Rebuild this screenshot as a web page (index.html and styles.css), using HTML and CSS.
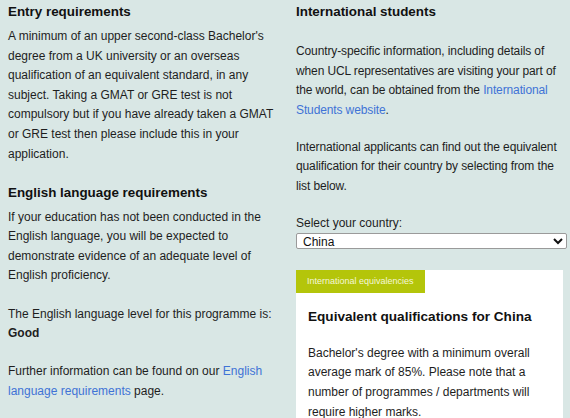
FILE: index.html
```html
<!DOCTYPE html>
<html lang="en">
<head>
  <meta charset="UTF-8" />
  <title>Entry requirements</title>
  <link rel="stylesheet" href="styles.css">
</head>
<body>
  <div class="page">
    <div class="col left">
      <h2>Entry requirements</h2>
      <p>A minimum of an upper second-class Bachelor's degree from a UK university or an overseas qualification of an equivalent standard, in any subject. Taking a GMAT or GRE test is not compulsory but if you have already taken a GMAT or GRE test then please include this in your application.</p>

      <h2 class="next">English language requirements</h2>
      <p>If your education has not been conducted in the English language, you will be expected to demonstrate evidence of an adequate level of English proficiency.</p>
      <p>The English language level for this programme is:<br><strong>Good</strong></p>
      <p>Further information can be found on our <a href="#">English language requirements</a> page.</p>
    </div>

    <div class="col right">
      <h2 class="wide">International students</h2>
      <p>Country-specific information, including details of when UCL representatives are visiting your part of the world, can be obtained from the <a href="#">International Students website</a>.</p>
      <p>International applicants can find out the equivalent qualification for their country by selecting from the list below.</p>
      <label class="select-label" for="country">Select your country:</label>
      <select id="country">
        <option>China</option>
      </select>

      <div class="card">
        <div class="tag">International equivalencies</div>
        <div class="card-body">
          <h3>Equivalent qualifications for China</h3>
          <p>Bachelor's degree with a minimum overall average mark of 85%. Please note that a number of programmes / departments will require higher marks.</p>
        </div>
      </div>
    </div>
  </div>
</body>
</html>
```

FILE: styles.css
```css
body { margin: 0; font-family: "Liberation Sans", Arial, sans-serif; font-size: 12px; line-height: 19.6px; color: #1e1e1e; background: #d9e7e5; height: 418px; overflow: hidden; }
.page { display: grid; grid-template-columns: 288px 1fr; padding: 0 3px 0 8px; }
.col h2 { font-size: 13.4px; font-weight: bold; margin: 2px 0 5px; line-height: 20px; color: #111; }
.col h2.next { margin-top: 15px; }
.col h2.wide { margin-bottom: 20px; }
.col p { margin: 0 0 18.5px; }
.left p { max-width: 272px; }
.right p { letter-spacing: -0.12px; margin-bottom: 17.5px; }
a { color: #3f73d6; text-decoration: none; }
.right { display: flex; flex-direction: column; align-items: stretch; }
.select-label { display: block; }
select { font-family: inherit; font-size: 12px; height: 16px; padding: 0 2px; margin: -1px 0 0; border: 1px solid #9a9a9a; border-radius: 2px; background: #fff; color: #111; }
.card { background: #fff; margin-top: 21px; margin-right: 4px; }
.tag { display: inline-block; background: #b4c50a; color: #f4f7d8; font-size: 9px; padding: 0 11px; line-height: 23px; }
.card-body { padding: 14px 12px 0; }
.card h3 { font-size: 13.6px; margin: 0 0 17px; line-height: 20px; color: #111; }
.card p { margin: 0; padding-right: 20px; letter-spacing: 0; }
```
